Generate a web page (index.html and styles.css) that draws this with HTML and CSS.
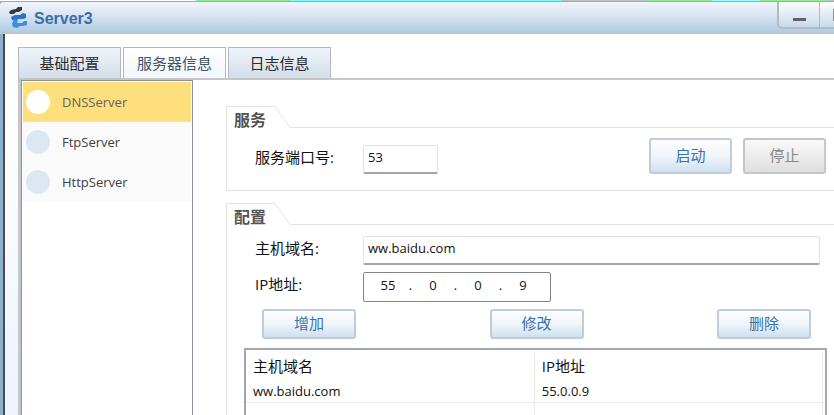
FILE: index.html
```html
<!DOCTYPE html>
<html lang="zh-CN">

<head>
    <meta charset="utf-8">
    <meta content="width=device-width, initial-scale=1" name="viewport">
    <title>Server3</title>
    <link rel="stylesheet" href="styles.css">
</head>

<body>
    <div class="topology"></div>
    <div class="window">
        <!-- 标题栏 -->
        <header class="titlebar">
            <svg class="logo" width="22" height="24" viewBox="0 0 22 24">
                <path d="M1 6l2-2 5-1 2-2 4 0 0 3-3 2-3 0-2 2-4 0z" fill="#35383c"/>
                <path d="M3 11l4-2 5 0 3-2 3 1 0 4-3 1-5 0-2 2-4-1z" fill="#2a74c6"/>
                <path d="M6 13l4 1-1 3 5 0 2-2 3 0 0 4-4 1-3 0-3 2-4-1-1-3z" fill="#3f8de0"/>
            </svg>
            <h1>Server3</h1>
            <div class="controls">
                <button type="button" class="minimize" aria-label="最小化"><span></span></button>
                <button type="button" class="maximize" aria-label="最大化"><span></span></button>
            </div>
        </header>

        <div class="client">
            <nav class="tabs">
                <button type="button">基础配置</button>
                <button type="button" class="active">服务器信息</button>
                <button type="button">日志信息</button>
            </nav>

            <div class="pane">
                <!-- 服务列表 -->
                <ul class="servers">
                    <li class="selected"><span class="dot"></span>DNSServer</li>
                    <li><span class="dot"></span>FtpServer</li>
                    <li><span class="dot"></span>HttpServer</li>
                </ul>

                <main class="content">
                    <!-- 服务 -->
                    <section class="group">
                        <div class="group-head">
                            <h2>服务</h2>
                            <svg width="15" height="22" viewBox="0 0 15 22"><path d="M0 .5L15 21.5" fill="none" stroke="#e2e2e2"/></svg>
                            <span class="rule"></span>
                        </div>
                        <div class="group-body service">
                            <label for="port">服务端口号:</label>
                            <input id="port" class="text port" type="text" value="53">
                            <div class="actions">
                                <button type="button" class="btn">启动</button>
                                <button type="button" class="btn" disabled>停止</button>
                            </div>
                        </div>
                    </section>

                    <!-- 配置 -->
                    <section class="group config">
                        <div class="group-head">
                            <h2>配置</h2>
                            <svg width="15" height="22" viewBox="0 0 15 22"><path d="M0 .5L15 21.5" fill="none" stroke="#e2e2e2"/></svg>
                            <span class="rule"></span>
                        </div>
                        <div class="group-body">
                            <div class="row">
                                <label for="host">主机域名:</label>
                                <input id="host" class="text host" type="text" value="ww.baidu.com">
                            </div>
                            <div class="row">
                                <label for="ip1">IP地址:</label>
                                <div class="ip">
                                    <input id="ip1" type="text" value="55"><span>.</span>
                                    <input type="text" value="0" aria-label="IP 2"><span>.</span>
                                    <input type="text" value="0" aria-label="IP 3"><span>.</span>
                                    <input type="text" value="9" aria-label="IP 4">
                                </div>
                            </div>
                            <div class="toolbar">
                                <button type="button" class="btn">增加</button>
                                <button type="button" class="btn">修改</button>
                                <button type="button" class="btn">删除</button>
                            </div>
                            <div class="records">
                                <table>
                                    <thead>
                                        <tr><th>主机域名</th><th>IP地址</th></tr>
                                    </thead>
                                    <tbody>
                                        <tr><td>ww.baidu.com</td><td>55.0.0.9</td></tr>
                                        <tr><td></td><td></td></tr>
                                    </tbody>
                                </table>
                            </div>
                        </div>
                    </section>
                </main>
            </div>
        </div>
    </div>
</body>

</html>
```
FILE: styles.css
```css
* {
    box-sizing: border-box;
}

body {
    display: flex;
    flex-direction: column;
    height: 100vh;
    margin: 0;
    overflow: hidden;
    background-color: #fff;
    font: 13px/20px "Open Sans", "Noto Sans CJK SC", sans-serif;
    color: #111;
}

button, input {
    font: inherit;
    color: inherit;
}

/*窗口后面的拓扑区*/
.topology {
    flex: none;
    height: 1px;
    background: linear-gradient(to right, #fff 196px, #90ee90 196px, #90ee90 290px, #7ff 290px, #7ff 561px, #c0c0c0 561px, #c0c0c0 648px, #90ee90 648px, #90ee90 712px, #9ff 712px, #9ff 760px, #90ee90 760px, #90ee90 827px, #c0c0c0 827px);
}

.window {
    display: flex;
    flex: 1;
    flex-direction: column;
    min-height: 0;
    border-left: 3px solid #8fb0cc;
}

/*标题栏*/
.titlebar {
    display: flex;
    flex: none;
    height: 33px;
    margin-left: -3px;
    padding-left: 8px;
    border-top: 1px solid #a5a8aa;
    border-bottom: 2px solid #bcc6ce;
    border-top-left-radius: 4px;
    background: linear-gradient(#f1f5fc, #d5e2ef 50%, #afcce4);
}

.titlebar .logo {
    margin-top: 4px;
}

.titlebar h1 {
    flex: 1;
    margin: 0 0 0 4px;
    font: bold 16px/34px "Liberation Sans", sans-serif;
    color: #3a6ea9;
}

.controls {
    display: flex;
    height: 27px;
    border: 2px solid #b2bac2;
    border-width: 0 0 2px 2px;
    border-bottom-left-radius: 5px;
    background: linear-gradient(#fdfdfe, #c7daea);
}

.controls button {
    padding: 0;
    border: 0;
    background: none;
}

.controls .minimize {
    width: 41px;
    border-right: 1px solid #b2bac2;
}

.controls .minimize span {
    display: block;
    width: 13px;
    height: 3px;
    margin: 9px auto 0;
    background-color: #5f6268;
}

.controls .maximize {
    width: 14px;
    padding-left: 13px;
}

.controls .maximize span {
    display: block;
    height: 12px;
    border-left: 1px solid #8a8e94;
}

/*页签*/
.client {
    display: flex;
    flex: 1;
    flex-direction: column;
    min-height: 0;
    padding: 13px 0 0 13px;
    border-left: 2px solid #454c52;
    background: linear-gradient(#fff 20%, #eef3ff);
}

.tabs {
    display: flex;
    flex: none;
    gap: 2px;
}

.tabs button {
    width: 103px;
    height: 31px;
    padding: 0;
    border: 1px solid #b4b8bd;
    border-bottom: 0;
    background: linear-gradient(#f0f4fa, #d3deea);
    font-size: 15px;
    color: #2a2c30;
}

.tabs .active {
    background: linear-gradient(#fff, #f1f7fd);
    color: #3f5468;
}

.pane {
    display: flex;
    flex: 1;
    min-height: 0;
    border: solid #c4c6c8;
    border-width: 2px 0 0 3px;
    background-color: #fff;
}

/*服务列表*/
.servers {
    flex: none;
    width: 172px;
    margin: 0;
    padding: 1px;
    border: 1px solid #8a929b;
    border-bottom: 0;
    list-style-type: none;
}

.servers li {
    display: flex;
    align-items: center;
    gap: 12px;
    height: 40px;
    padding-left: 3px;
    background-color: #fafafa;
    color: #3e4046;
}

.servers .dot {
    width: 24px;
    height: 24px;
    border-radius: 50%;
    background-color: #dde7f2;
}

.servers .selected {
    background-color: #ffdf7c;
    color: #64645c;
}

.servers .selected .dot {
    background-color: #fff;
}

.content {
    display: flex;
    flex: 1;
    flex-direction: column;
    gap: 12px;
    min-width: 0;
    padding: 26px 0 0 33px;
}

/*分组框*/
.group-head {
    display: flex;
    height: 22px;
}

.group-head h2 {
    width: 49px;
    margin: 0;
    padding-left: 7px;
    border: 1px solid #e2e2e2;
    border-width: 1px 0 0 1px;
    font-size: 16px;
    line-height: 26px;
    color: #555;
}

.group-head .rule {
    flex: 1;
    border-bottom: 1px solid #e2e2e2;
}

.group-body {
    border-left: 1px solid #e2e2e2;
}

.service {
    display: flex;
    height: 63px;
    padding: 10px 8px 0 28px;
    border-bottom: 1px solid #e2e2e2;
}

label {
    flex: none;
    width: 108px;
    font-size: 15px;
    line-height: 24px;
}

.service label {
    margin-top: 7px;
}

.text {
    height: 29px;
    padding: 0 4px 4px;
    border: 1px solid #e2e2e2;
    border-bottom: 2px solid #a5a5a5;
    border-radius: 2px;
    background-color: #fff;
}

.port {
    width: 75px;
    margin-top: 7px;
}

.actions {
    display: flex;
    gap: 11px;
    margin-left: auto;
}

.btn {
    width: 94px;
    height: 30px;
    padding: 0 0 2px;
    border: 2px solid #c0ccd9;
    border-radius: 3px;
    background: linear-gradient(#fdfefe, #f0f5fa 50%, #cfe0f0);
    font-size: 15px;
    color: #3a70ad;
}

.btn:disabled {
    border-color: #c6c6c6;
    background: linear-gradient(#fafafa, #dedede);
    color: #888;
}

.actions .btn {
    width: 83px;
    height: 36px;
}

/*配置*/
.config {
    display: flex;
    flex: 1;
    flex-direction: column;
    min-height: 0;
}

.config .group-body {
    display: flex;
    flex: 1;
    flex-direction: column;
    min-height: 0;
    padding: 11px 7px 0 17px;
}

.row {
    display: flex;
    flex: none;
    margin: 0 7px 7px 11px;
}

.host {
    flex: 1;
}

.ip {
    display: flex;
    width: 188px;
    height: 30px;
    padding-left: 9px;
    border: 1px solid #858585;
    border-radius: 2px;
    background-color: #fff;
}

.ip input {
    width: 30px;
    height: 24px;
    padding: 0;
    border: 0;
    background: none;
    text-align: center;
}

.ip span {
    width: 15px;
    line-height: 24px;
    text-align: center;
}

.toolbar {
    display: flex;
    flex: none;
    justify-content: space-between;
    margin: 0 16px 9px 18px;
}

.records {
    flex: 1;
    min-height: 0;
    padding: 2px 2px 0 0;
    border: 2px solid #a3a8ae;
    border-bottom: 0;
    overflow: hidden;
}

.records table {
    width: 100%;
    border-collapse: collapse;
    table-layout: fixed;
}

.records th, .records td {
    height: 22px;
    padding: 0 7px;
    border: 1px solid #eaeaea;
    border-width: 0 1px 1px 0;
    text-align: left;
}

.records th {
    height: 28px;
    border-bottom: 0;
    font-size: 15px;
    font-weight: normal;
}
```
